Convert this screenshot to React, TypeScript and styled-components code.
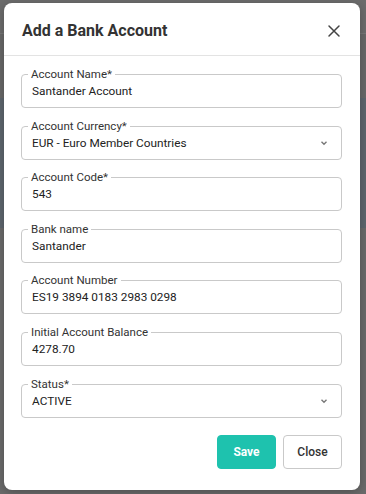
import React, { FC } from 'react';
import styled, { createGlobalStyle } from 'styled-components';

const GlobalStyle = createGlobalStyle`
  html, body {
    margin: 0;
    padding: 0;
  }
  body {
    font-family: Roboto, "Noto Sans", "Liberation Sans", sans-serif;
    color: #333;
  }
  * {
    box-sizing: border-box;
  }
`;

type Field = {
  label: string;
  value: string;
  select?: boolean;
};

const fields: Field[] = [
  { label: 'Account Name*', value: 'Santander Account' },
  { label: 'Account Currency*', value: 'EUR - Euro Member Countries', select: true },
  { label: 'Account Code*', value: '543' },
  { label: 'Bank name', value: 'Santander' },
  { label: 'Account Number', value: 'ES19 3894 0183 2983 0298' },
  { label: 'Initial Account Balance', value: '4278.70' },
  { label: 'Status*', value: 'ACTIVE', select: true },
];

const Backdrop = styled.div`
  width: 366px;
  height: 494px;
  padding: 3px 6px 4px 4px;
  background: linear-gradient(
    to bottom,
    #6c6c6c 0,
    #6c6c6c 33px,
    #777 33px,
    #777 34px,
    #686868 34px,
    #686868 98px,
    #5e666e 98px,
    #5e666e 228px,
    #6a6a6a 228px
  );
`;

const Modal = styled.div`
  display: flex;
  flex-direction: column;
  height: 100%;
  background: #fff;
  border-radius: 8px;
  box-shadow: 0 2px 10px rgba(0, 0, 0, 0.25);
`;

const Header = styled.div`
  display: flex;
  align-items: center;
  justify-content: space-between;
  height: 53px;
  padding: 2px 14px 0 18px;
  border-bottom: 1px solid #e3e3e3;
`;

const Title = styled.h2`
  margin: 0;
  font-size: 16px;
  font-weight: 700;
  color: #333;
`;

const CloseIcon = styled.button`
  display: flex;
  align-items: center;
  justify-content: center;
  width: 24px;
  height: 24px;
  margin-top: 2px;
  padding: 0;
  border: none;
  background: none;
  color: #444;
`;

const Body = styled.div`
  display: flex;
  flex-direction: column;
  gap: 17.6px;
  padding: 18px 18px 0 17px;
`;

const Box = styled.div`
  position: relative;
  display: flex;
  align-items: center;
  justify-content: space-between;
  height: 34px;
  padding: 0 13px 0 10px;
  border: 1px solid #c9c9c9;
  border-radius: 4px;
`;

const Label = styled.span`
  position: absolute;
  top: -8px;
  left: 6px;
  padding: 0 3px;
  background: #fff;
  font-size: 11.5px;
  line-height: 14px;
  color: #333;
`;

const Value = styled.span`
  font-size: 11.8px;
  color: #222;
`;

const Chevron = styled.span`
  display: flex;
  color: #777;
`;

const Footer = styled.div`
  display: flex;
  justify-content: flex-end;
  gap: 7px;
  padding: 17px 18px 0 0;
`;

const Button = styled.button<{ $primary?: boolean }>`
  width: 59px;
  height: 34px;
  border-radius: 4px;
  font-family: inherit;
  font-size: 12px;
  font-weight: ${p => (p.$primary ? 700 : 500)};
  color: ${p => (p.$primary ? '#fff' : '#333')};
  background: ${p => (p.$primary ? '#1ec2ae' : '#fff')};
  border: 1px solid ${p => (p.$primary ? '#1ec2ae' : '#c9c9c9')};
`;

const App: FC = () => (
  <>
    <GlobalStyle />
    <Backdrop>
      <Modal>
        <Header>
          <Title>Add a Bank Account</Title>
          <CloseIcon aria-label="close">
            <svg width="14" height="14" viewBox="0 0 14 14">
              <path d="M2 2L12 12M12 2L2 12" stroke="currentColor" strokeWidth="1.5" strokeLinecap="round" />
            </svg>
          </CloseIcon>
        </Header>
        <Body>
          {fields.map(f => (
            <Box key={f.label}>
              <Label>{f.label}</Label>
              <Value>{f.value}</Value>
              {f.select && (
                <Chevron>
                  <svg width="8" height="6" viewBox="0 0 8 6">
                    <path d="M1.5 1.8L4 4.2L6.5 1.8" fill="none" stroke="currentColor" strokeWidth="1.4" />
                  </svg>
                </Chevron>
              )}
            </Box>
          ))}
        </Body>
        <Footer>
          <Button $primary>Save</Button>
          <Button>Close</Button>
        </Footer>
      </Modal>
    </Backdrop>
  </>
);

export default App;
